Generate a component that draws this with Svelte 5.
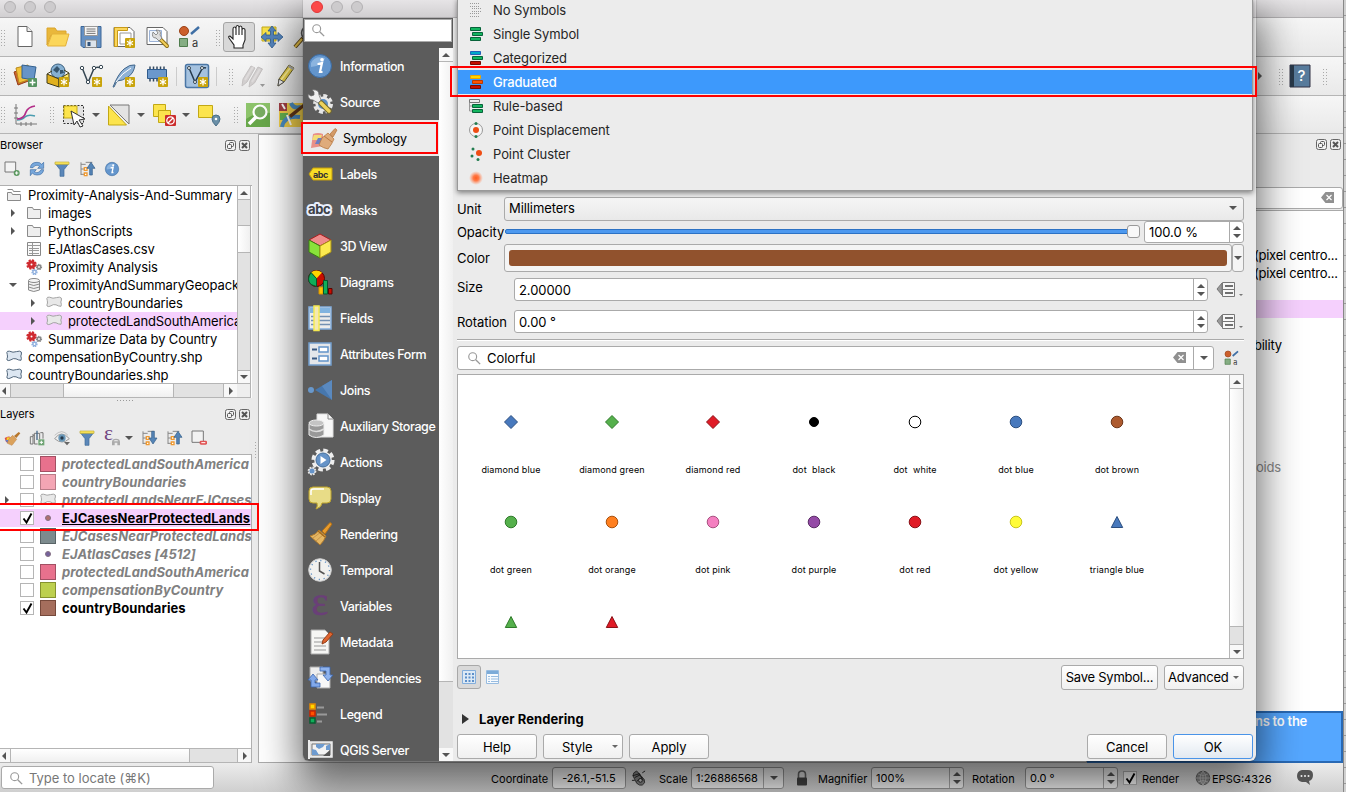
<script>
  const star = '<rect x="13" y="13" width="10" height="10" rx="1" fill="#c9a40c"/><path d="M18 14.500v7M15 16.200l6 3.600M21 16.200l-6 3.600" stroke="#fff" stroke-width="1.300"/>';
  const sheet = '<path d="M5 1.5h9l5 5v15H5z" fill="#fff" stroke="#666"/><path d="M14 1.5v5h5" fill="#eee" stroke="#666"/>';
  const bars = (a, b, c) => `<path d="M2.5 1.5h10v3h-10z" fill="${a[0]}" stroke="${a[1]}"/><path d="M4.500 6.500h10v3h-10z" fill="${b[0]}" stroke="${b[1]}"/><path d="M2.500 11.500h10v3h-10z" fill="${c[0]}" stroke="${c[1]}"/>`;
  const green = ['#13b55f', '#08633a'];
  const gear = (x, y, r, c) => `<g transform="translate(${x} ${y})"><circle r="${r * 0.8}" fill="none" stroke="${c}" stroke-width="${r * 0.5}" stroke-dasharray="${r * 0.38} ${r * 0.248}"/><circle r="${r * 0.55}" fill="none" stroke="${c}" stroke-width="${r * 0.5}"/></g>`;
  const blob = (f, s) => `<path d="M.8 3.500Q1 1.800 3.500 2.200Q7 4 10.500 2.600Q14 1.500 15.300 3Q15.800 5 14.800 7Q15.800 9.500 15 11.300Q12.500 11.300 10 9.800Q7 9 5 10.800Q2.500 12.300 1 11Q.8 9.500 1.500 8Q1.500 5.500 .8 3.500z" fill="${f}" stroke="${s}"/>`;
  const brush = '<path d="M0 8q4-3 8-2l2 7q-4 3-8 1z" fill="#d94a4a"/><path d="M3 7h5v5H3z" fill="#f5d02c"/><path d="M1 11h8v4H4z" fill="#5a7fd0"/><path d="M6 10l6-6 6 6-7 9-7-3z" fill="#dba25c" stroke="#b97a35" stroke-width=".7"/><path d="M14 5l7-6 2.500 2-6 7z" fill="#b8772c"/>';
  const art = {
    page: sheet,
    folder: '<path d="M1 3h8l2 3h9v4H5L1 20z" fill="#e9b73b" stroke="#dba52c"/><path d="M6 9h17l-3.500 12H1.500z" fill="#fbd65b" stroke="#e3b13a"/>',
    save: '<path d="M2 1.500h20v21H4l-2-2z" fill="#6591c4" stroke="#3c6798"/><path d="M5.500 1.500h13v9h-13z" fill="#f5f5f5" stroke="#999"/><path d="M7.500 4h9M7.500 6.200h9M7.500 8.400h9" stroke="#777"/><path d="M6.500 15h11v7.500h-11z" fill="#dce3ea" stroke="#888"/><path d="M8.500 17h3v4h-3z" fill="#33547c"/>',
    newlayout: '<path d="M2 2.500h16l4 4v15H2z" fill="#fff" stroke="#666"/><path d="M2.500 2.500h13v3h-10v16h-3z" fill="#fbd65b" stroke="#c79a19"/><path d="M8 8h11v11H8z" fill="#fff" stroke="#999"/>' + star,
    layouts: '<path d="M2 2.500h16l4 4v13H2z" fill="#fff" stroke="#666"/><path d="M4.500 5.500h12v11h-12z" fill="#eef3fa" stroke="#9bb2d6"/><path d="M15 14l7 7" stroke="#8c6f18" stroke-width="4" stroke-linecap="round"/><path d="M15 14l7 7" stroke="#f4cf5a" stroke-width="2" stroke-linecap="round"/><path d="M8 7l3 3 2-2-2-3q6 0 4 5l2 3-3 3-3-3q-5 0-3-6z" fill="#ddd" stroke="#777" stroke-width=".8"/>',
    styles: '<circle cx="6" cy="6" r="4.500" fill="#cc5f2b" stroke="#9b4217"/><path d="M13 9l8-7" stroke="#3f6fa5" stroke-width="2.500"/><path d="M1.500 13.500h8v8h-8z" fill="#85ad83" stroke="#4f7c4d"/><text x="14" y="22" font-size="11" fill="#333" font-family="Inter, sans-serif">a</text>',
    hand: '<path d="M7 23v-3L2 13q-1-2 1-2l3 3V4q0-2 1.500-2T9 4v6V2.500q0-2 1.500-2T12 2.500V10V3q0-2 1.500-2T15 3v7V5q0-1.500 1.500-1.500T18 5v10l-2 5v3z" fill="#fff" stroke="#222" stroke-width="1.100"/>',
    pan: '<path d="M2 2h14v14H2z" fill="#fbe449" stroke="#c4aa18"/><path d="M12 1l4 5h-2.500v4H18V7.500l5 4.500-5 4.500V14h-4.500v4H16l-4 5-4-5h2.500v-4H6v2.500L1 12l5-4.500V10h4.500V6H8z" fill="#5585bd" stroke="#305d91" stroke-width=".8"/>',
    zoom: '<path d="M10 13l-8 9" stroke="#5d4619" stroke-width="4"/><path d="M9 14l-7 8" stroke="#eac44a" stroke-width="2"/><circle cx="15" cy="8" r="6.500" fill="#eee" stroke="#555" stroke-width="1.500"/>',
    datasource: '<path d="M1 8l13-4 4 12-13 5z" fill="#cc6230" stroke="#954017"/><path d="M3 4l12-3 3 14-12 4z" fill="#f1c13a" stroke="#ba8b1c"/><path d="M9 1l14 2-2 13-12-2z" fill="#6794c7" stroke="#33618f"/><rect x="15" y="14" width="9" height="9" rx="1" fill="#569361"/><path d="M19.500 15.500v6M16.500 18.500h6" stroke="#fff" stroke-width="1.500"/>',
    geopackage: '<circle cx="12" cy="7" r="7" fill="#86b0d2" stroke="#3b607f"/><path d="M7 6l4-4 3 3-3 4zM14 6l3 0 1 3-4 1z" fill="#37566f"/><path d="M1 10l12 5v8L1 19z" fill="#e0b01f" stroke="#413c1a"/><path d="M13 15l10-6v9l-10 5z" fill="#fde76a" stroke="#413c1a"/><path d="M1 10l5-3M23 9l-5-3" stroke="#413c1a"/>' + star,
    shape: '<path d="M3 3.500l6 15 6-14q2-2 6-1" fill="none" stroke="#354652" stroke-width="1.500"/><g fill="#fff" stroke="#354652"><circle cx="3" cy="4" r="1.700"/><circle cx="9" cy="18" r="1.700"/><circle cx="15" cy="4" r="1.700"/><circle cx="22" cy="3" r="1.700"/></g>' + star,
    feather: '<path d="M1 23Q6 10 12 5t11-4q-1 8-7 12T5 17L2 23z" fill="#8fb2d6" stroke="#44688c"/><path d="M4 18Q10 9 19 4" fill="none" stroke="#fff"/>' + star,
    chip: '<path d="M5 2.500v15M8.500 2.500v15M12 2.500v15M15.500 2.500v15M19 2.500v15" stroke="#33485f" stroke-width="1.500"/><path d="M2.500 5.500h19v9h-19z" fill="#6b98cc" stroke="#2f5b8d"/>' + star,
    virtual: '<rect x=".5" y=".500" width="23" height="23" rx="2" fill="#a5c2df" stroke="#4a76a5" stroke-width="1.500"/><path d="M4 4l6 14L17 5q2-2 4-1" fill="none" stroke="#263a4c" stroke-width="1.500"/><g fill="#fff" stroke="#354652"><circle cx="4" cy="4" r="1.500"/><circle cx="10" cy="18" r="1.500"/><circle cx="17" cy="4" r="1.500"/></g>' + star,
    pencils: '<path d="M2 15L10 2l4 2-8 14-5 4zM9 17l8-14 4.500 2-8 14-5.500 4z" fill="#d2cfcf" stroke="#c4c1c1"/><path d="M4 16l8-13M11 18l8-13" stroke="#dedbdb" stroke-width="2"/><path d="M19 20h5l-2.500 3z" fill="#999"/>',
    pencil: '<path d="M5 15L15 1l5 3-10 14-6 4z" fill="#ead24d" stroke="#6d6327"/><path d="M7 16L17 3" stroke="#fff398" stroke-width="1.500"/><path d="M5 15l5 3-6 4z" fill="#eee" stroke="#555"/><path d="M15 1l5 3-1 2-5-3z" fill="#aaa"/>',
    chart: '<path d="M3 1v20h21M1 5h4M1 10h4M1 15h4M8 19v4M13 19v4M18 19v4" fill="none" stroke="#777"/><path d="M4 17q5 0 8-3t10-1" fill="none" stroke="#4b9db0" stroke-width="1.500"/><path d="M4 16q7 0 9-7 2-5 9-6" fill="none" stroke="#b32d88" stroke-width="1.700"/>',
    select: '<path d="M1.500 2.500h20v18h-20z" fill="#e2e2e2" stroke="#333" stroke-dasharray="2 1.500"/><path d="M2 3h13v12H2z" fill="#fce44d" stroke="#c6ad17"/><path d="M9 8l14 8-6 1 4 6-3 1-3-6-3 4z" fill="#fff" stroke="#333"/>',
    deselect: '<path d="M3 2h19v19z" fill="#e3e3e3" stroke="#777"/><path d="M1.500 3v19h18z" fill="#fce44d" stroke="#c2a815"/>',
    clear: '<path d="M1.500 1.500h12v12h-12z" fill="#fce44d" stroke="#c2a815"/><path d="M6.500 7.500h12v12h-12z" fill="#fce44d" stroke="#c2a815"/><rect x="13" y="12" width="11" height="11" rx="1" fill="#cb2d2d"/><circle cx="18.500" cy="17.500" r="3.700" fill="none" stroke="#fff" stroke-width="1.300"/><path d="M16 20l5-5" stroke="#fff" stroke-width="1.300"/>',
    pinmap: '<path d="M1.500 2.500h14v12h-14z" fill="#fce44d" stroke="#c2a815"/><path d="M19 12q4 0 4 4 0 3-4 7-4-4-4-7 0-4 4-4z" fill="#6a8fa7" stroke="#4a6f88"/><circle cx="19" cy="16" r="1.300" fill="#fff"/>',
    find: '<path d="M0 0h24v24H0z" fill="#68a84b"/><path d="M0 0h24v10q-12-2-24 6z" fill="#8dc46b"/><path d="M10 14l-7 7" stroke="#fff" stroke-width="3.500"/><circle cx="14" cy="9" r="6.500" fill="#79ad62" stroke="#fff" stroke-width="2.200"/>',
    osm: '<path d="M0 0h24v24H0z" fill="#f2d04b"/><path d="M0 0h8v8H0z" fill="#a43f46"/><path d="M1 10h8v7H1z" fill="#65b250"/><path d="M3 24q2-12 18-10M12 0q2 6 10 4" fill="none" stroke="#4c8ec4" stroke-width="4"/><path d="M3 1l3 5M8 12l4 10" stroke="#fff" stroke-width="2"/><path d="M10 12L24 1v4l-12 10z" fill="#643819"/>',
    addlayer: '<path d="M1.500 1.500h16v15h-16z" fill="#f3f3f3" stroke="#777" stroke-width="1.500"/><circle cx="19" cy="18" r="4.500" fill="#5c9960"/><path d="M16.500 18h5M19 15.500v5" stroke="#fff" stroke-width="1.500"/>',
    refresh: '<path d="M2 10Q3 2 12 2q5 0 7 3l3-3v9h-9l3-3q-6-4-10 2zM22 13q-1 8-10 8-5 0-7-3l-3 4v-9h9l-3 3q6 4 10-3z" fill="#78a8dc" stroke="#3c6da4"/>',
    filter: '<path d="M2 4h20l-7 9v10h-6V13z" fill="#5b87b9" stroke="#3c6999"/><path d="M1.500 1.500h21v3.500h-21z" fill="#fbe65a" stroke="#c1ad37"/>',
    collapse: '<path d="M3 2v19M3 5h7M3 12h7M3 20h7M10 2h10" fill="none" stroke="#888" stroke-width="1.500"/><path d="M8 10h4v4H8zM8 18h4v4H8z" fill="#fff" stroke="#ef9930" stroke-width="2"/><path d="M16 21V11h-4l6-9 6 9h-4v10z" fill="#5585b7" stroke="#315c88"/>',
    expand: '<path d="M3 2v19M3 5h7M3 12h7M3 20h7M10 2h10" fill="none" stroke="#888" stroke-width="1.500"/><path d="M8 10h4v4H8zM8 18h4v4H8z" fill="#fff" stroke="#ef9930" stroke-width="2"/><path d="M16 2v10h-4l6 9 6-9h-4V2z" fill="#5585b7" stroke="#315c88"/>',
    info: '<circle cx="12" cy="12" r="11.500" fill="#6395cc" stroke="#3b6aa0"/><path d="M3 9q4-8 14-5-2 8-14 9z" fill="#8bb4df"/><path d="M10 10l4-1-2 9h2.500M9.500 10h3" fill="none" stroke="#fff" stroke-width="2.200"/><circle cx="14" cy="5.700" r="1.800" fill="#fff"/>',
    brushbig: '<g transform="translate(1 4)">' + brush + '</g>',
    group: '<path d="M6 6v15H2V10h4M8 21V5h8v9M8 8H6" fill="none" stroke="#777" stroke-width="1.500"/><path d="M17 4h4v9" fill="none" stroke="#777" stroke-width="1.500"/><path d="M12 1v14" stroke="#45688a" stroke-width="2"/><path d="M8 21h5" stroke="#777" stroke-width="1.500"/><path d="M14 14h9v9h-9z" fill="#70a575"/><path d="M16 18.500h5M18.500 16v5" stroke="#fff" stroke-width="1.500"/>',
    eye: '<path d="M1 13q10-14 22 0-11 10-22 0z" fill="#eee" stroke="#999" stroke-width="1.500"/><circle cx="12" cy="12" r="5.500" fill="#6796b7"/><circle cx="12" cy="12" r="2.500" fill="#26394b"/><path d="M1 8Q12-3 21 8" fill="none" stroke="#aaa"/><path d="M15 18h9l-4.500 5z" fill="#666"/>',
    epsilon: '<text x="0" y="15" font-size="32" fill="#70447f" font-family="Liberation Serif, serif">ε</text><path d="M13 23v-5q0-4 5-4t5 4v5M15 23v-5h6v5" fill="none" stroke="#aaa" stroke-width="2"/>',
    remove: '<path d="M1.500 1.500h17v17h-17z" fill="#f2f2f2" stroke="#777" stroke-width="1.500"/><rect x="13" y="16" width="11" height="6" rx="2" fill="#e15454"/><path d="M15.500 19h6" stroke="#fff" stroke-width="1.500"/>',
    dir: '<path d="M1.500 2.500h5l1 2h7v9h-13z" fill="#eee" stroke="#8a8a8a"/>',
    diropen: '<path d="M1.500 13.500v-8h4l1 2h8v6zM1.500 2.500h5l1 2h7" fill="#eee" stroke="#8a8a8a"/>',
    table: '<path d="M1.500 1.500h13v13h-13z" fill="#fafafa" stroke="#888"/><path d="M2 4.500h12M3 7.500h10M3 9.500h10M3 12.500h10M6.500 2v12" stroke="#999"/>',
    model: gear(5.5, 5.5, 5, '#cf2b30') + '<circle cx="5.500" cy="5.500" r="2.500" fill="#cf2b30"/><circle cx="5.500" cy="5.500" r="1" fill="#fff"/>' + gear(13, 8, 3, '#888') + gear(8.500, 13, 3, '#92b2df'),
    db: '<path d="M2.500 4v9q5 3 11 0V4" fill="#f1f1f1" stroke="#8a8a8a"/><ellipse cx="8" cy="3.500" rx="5.500" ry="2" fill="#f5f5f5" stroke="#8a8a8a"/><path d="M2.500 7q5 3 11 0M2.500 10q5 3 11 0" fill="none" stroke="#8a8a8a"/>',
    poly: blob('#e8e8e8', '#a5a5a5'),
    polyblue: blob('#dce6f1', '#52677c'),
    search: '<circle cx="6.500" cy="6.500" r="4.500" fill="none" stroke="#999" stroke-width="1.300"/><path d="M10 10l5 5" stroke="#999" stroke-width="1.600"/>',
    none: '<path d="M2 1.500h10M2 4.500h10M4 6.500h10M4 9.500h10M2 11.500h10M2 14.500h10" stroke="#999" stroke-dasharray="1 1"/>',
    single: bars(green, green, green),
    categorized: bars(['#00a8c8', '#2560b8'], green, ['#c40d00', '#760800']),
    graduated: bars(['#ffd500', '#eea400'], ['#ff5200', '#b83a00'], ['#c40d00', '#760800']),
    rule: '<path d="M1.500 4v9h3M1.500 8h3" fill="none" stroke="#999"/><path d="M1.500 1.500h10v3h-10z" fill="#eee" stroke="#777"/><path d="M4.500 6.500h10v3h-10zM4.500 11.500h10v3h-10z" fill="#13b55f" stroke="#08633a"/>',
    displacement: '<circle cx="8" cy="8" r="6.500" fill="#f5f5f5" stroke="#999"/><circle cx="8" cy="8" r="3" fill="#ef4d14"/><circle cx="8" cy="1.500" r="1.500" fill="#237d50"/><circle cx="8" cy="14.500" r="1.500" fill="#237d50"/>',
    cluster: '<circle cx="11" cy="7" r="3" fill="#ef4d14"/><g fill="#237d50"><circle cx="5" cy="3" r="1.500"/><circle cx="4" cy="10" r="1.500"/><circle cx="10" cy="13.500" r="1.500"/></g>',
    heat: '<defs><radialGradient id="heat"><stop offset="0" stop-color="#ff5d1f"/><stop offset=".4" stop-color="#ff7a48"/><stop offset="1" stop-color="#ff9b75" stop-opacity="0"/></radialGradient></defs><circle cx="8" cy="8" r="7" fill="url(#heat)"/>',
    source: gear(15, 14, 9.500, '#e7e7e7') + '<circle cx="15" cy="14" r="5" fill="#5e8fc4"/><path d="M13 13l8 8" stroke="#71672f" stroke-width="5.500" stroke-linecap="round"/><path d="M13 13l8 8" stroke="#eed35b" stroke-width="3.500" stroke-linecap="round"/><path d="M0 4l3 2 3-1V2L4 0q7-1 7 5l2 5-3 3-5-3q-5 0-5-6z" fill="#eee" stroke="#666" stroke-width=".7"/>',
    symbology: '<path d="M2 8q5-2 10 0v12L0 22z" fill="#e99088"/><path d="M3 9h8l-2 5H1z" fill="#f2dc75"/><path d="M7 12h7v6H4z" fill="#6c7ec2"/><path d="M11 12l6-5 6 6q-2 5-6 10-5-1-9-4z" fill="#dfab7b" stroke="#b97a43" stroke-width=".8"/><path d="M13 10l8 6" stroke="#b97a43"/><path d="M19 8l5-5.500 2 1.500-4 7z" fill="#d39a67" stroke="#b97a43" stroke-width=".8"/>',
    labels: '<path d="M1 12l4-6h19v12H5z" fill="#f8dd25" stroke="#c39c0d"/><text x="5" y="15.500" font-size="9" font-weight="700" fill="#333" font-family="Inter, sans-serif">abc</text>',
    masks: '<text x="0" y="16" font-size="13" font-weight="700" fill="#3c4047" stroke="#e8eefb" stroke-width="4" stroke-linejoin="round" paint-order="stroke" font-family="Inter, sans-serif">abc</text>',
    cube: '<path d="M12 0l11 6-11 6L1 6z" fill="#ef8b8b" stroke="#a91e1e"/><path d="M1 6l11 6v12L1 18z" fill="#89e23a" stroke="#388013"/><path d="M23 6l-11 6v12l11-6z" fill="#fce94f" stroke="#a99114"/>',
    diagrams: '<circle cx="8.500" cy="8.500" r="8" fill="#c80d00" stroke="#590500"/><path d="M8.500 8.500L3 2.500q5-4 11 0z" fill="#ffd500"/><path d="M8.500 8.500L3 2.500q-5 7 0 12l5.500 2z" fill="#10ae59" stroke="#06552c"/><path d="M11 17h4v7h-4z" fill="#ffc500" stroke="#d89000"/><path d="M15.500 10.500h4V24h-4z" fill="#10ae59" stroke="#06552c"/><path d="M20.500 18.500h3.500V24h-3.500z" fill="#c80d00" stroke="#590500"/>',
    fields: '<path d="M1 1h22v22H1z" fill="#ececec" stroke="#83addb" stroke-width="1.500"/><path d="M2 2h20v5H2z" fill="#81b3df"/><path d="M3 10.500h19M3 14.500h19M3 18.500h19" stroke="#7290b2" stroke-width="1.300"/><path d="M6 0h5v24.500H6z" fill="#f4e9b0" stroke="#f5e950" stroke-width="1.500"/>',
    form: '<path d="M1 1h22v22H1z" fill="#e3e6ea" stroke="#739fce" stroke-width="1.500"/><path d="M4 7.500h5M4 16.500h5" stroke="#385881" stroke-width="2"/><path d="M11 5h9v5h-9zM11 14h9v5h-9z" fill="#fff" stroke="#6394c9" stroke-width="1.500"/>',
    joins: '<circle cx="3" cy="12" r="3" fill="#6998cb"/><path d="M7 12L24 2v20z" fill="#4777ad"/><path d="M14 8l10-6v20z" fill="#5a89bf"/>',
    storage: '<path d="M9 0h11l5 5v18H9z" fill="#f7f7f7" stroke="#ddd"/><path d="M20 0v5h5" fill="none" stroke="#888"/><path d="M1 10v11q7 5 15 0V10" fill="#999" stroke="#eee"/><ellipse cx="8.500" cy="9" rx="7.500" ry="3" fill="#c4c4c4" stroke="#eee"/><path d="M1 15q7 5 15 0" fill="none" stroke="#ddd" stroke-width="1.500"/>',
    actions: gear(15, 10, 11, '#eee') + '<circle cx="15" cy="10" r="7" fill="#6593c8" stroke="#456f9c"/><path d="M12.500 6l6 4-6 4z" fill="#fff"/>' + gear(4, 21, 4.200, '#e5e5e5') + '<circle cx="4" cy="21" r="2.500" fill="#6593c8"/>',
    display: '<path d="M5 1h14q4 0 4 4v8q0 4-4 4h-5q0 4-6 6 2-3 1-6H5q-4 0-4-4V5q0-4 4-4z" fill="#e8dc87" stroke="#bda32b"/><path d="M3 9V5q0-2 3-2h10" fill="none" stroke="#fff" stroke-width="1.500"/>',
    rendering: '<path d="M14 9l8-8.500 2 1.500-7 10z" fill="#e79b2d" stroke="#b06f18"/><path d="M2 14q6-1 9-6l7 6q-2 5-6 9z" fill="#e6b763" stroke="#b07a2d"/><path d="M5 16l8-6M8 19l8-7" stroke="#c9964a"/><path d="M10 9l7 6" stroke="#a3691b" stroke-width="1.500"/>',
    clock: '<circle cx="12" cy="12" r="11.300" fill="#f1f1ef" stroke="#ccc"/><path d="M11.500 4v9l5 3" fill="none" stroke="#555" stroke-width="1.500"/><circle cx="12" cy="12" r="9.500" fill="none" stroke="#6090c4" stroke-width="1.300" stroke-dasharray="1.200 3.770"/>',
    variable: '<text x="3.500" y="21" font-size="40" fill="#6a3f78" stroke="#6a3f78" stroke-width=".6" font-family="Liberation Serif, serif">ε</text>',
    metadata: '<path d="M3 0h14l4 4v20H3z" fill="#f6f6f4" stroke="#aaa"/><path d="M6 8h11M6 12h8M6 16h12M6 20h12" stroke="#999"/><path d="M14 14l1-4 7-8 3 2-7 8z" fill="#e0652f" stroke="#943d17"/>',
    dependencies: '<path d="M2 1h13v14H2z" fill="#eee" stroke="#aaa"/><path d="M9 8h13v14H9z" fill="#f7f7f7" stroke="#aaa"/><path d="M12 1h10v8h3l-5 6-5-6h3V5h-6z" fill="#8fb3ee" stroke="#3a65ad" stroke-width=".8"/><path d="M12 21H3v-7H0l5-6 5 6H7v3h5z" fill="#82a9ea" stroke="#3a65ad" stroke-width=".8"/>',
    legend: '<path d="M2 2h5v5H2z" fill="#ffd700" stroke="#e68900" stroke-width="1.500"/><path d="M2 9h5v5H2z" fill="#ff5200" stroke="#c92500" stroke-width="1.500"/><path d="M2 16h5v5H2z" fill="#10ae59" stroke="#075d31" stroke-width="1.500"/><path d="M9 5.500h7M9 12.500h10M9 19.500h5" stroke="#999" stroke-width="2"/>',
    server: '<path d="M1 4h23v15H1z" fill="#ddd" stroke="#eee" stroke-width="1.500"/><path d="M1 2v19" stroke="#eee" stroke-width="2"/><path d="M4 6h18v11H4z" fill="#f2f2f2" stroke="#777"/><path d="M8 6h9l-2 3-4 2-3-2zM4 11l4 1 3 5H4zM18 8l4-2v6h-4z" fill="#6d9bd0"/><path d="M15 18l7-6v6z" fill="#555"/>',
    override: '<path d="M0 8l5-6v12z" fill="#999" stroke="#777"/><path d="M5.500 1.500h12v14h-12z" fill="#f7f7f7" stroke="#777"/><path d="M8 5h8M8 12h8" stroke="#444" stroke-width="1.500"/><path d="M6 8.500h11" stroke="#777"/>',
    grid: '<path d="M.5.5h13v13H.5z" fill="#dce9f5" stroke="#84aedb"/><g fill="#5c8fca"><path d="M3 3h2v2H3zM6.500 3h2v2h-2zM10 3h2v2h-2zM3 6.500h2v2H3zM6.500 6.500h2v2h-2zM10 6.500h2v2h-2zM3 10h2v2H3zM6.500 10h2v2h-2zM10 10h2v2h-2z"/></g>',
    list: '<path d="M.5.5h12v13H.5z" fill="#f6fafe" stroke="#98bce0"/><path d="M1 1h11v3H1z" fill="#7cabd8"/><path d="M2 6.500h2M5 6.500h7M2 9h2M5 9h7M2 11.500h2M5 11.500h7" stroke="#98bce0"/>',
    lock: '<path d="M4.500 8V4.500q0-3.500 3.500-3.500t3.500 3.500V8" fill="none" stroke="#666" stroke-width="1.600"/><rect x="3" y="7.500" width="10" height="8" rx="1" fill="#444"/>',
    mouse: '<path d="M3 3l3-2 8 9q2 4-2 6-3 1-6-2L2 6z" fill="#888" stroke="#222" stroke-width=".8"/><path d="M2 6l7-2M4 8l6-3M8 3l5 8M6 12l6-4M12 3l3-2M1 11h3" stroke="#222"/><circle cx="10" cy="11" r="2" fill="#ccc" stroke="#222"/>',
    globe: '<circle cx="8" cy="8" r="6.800" fill="#888" stroke="#666"/><path d="M1 8h14M8 1v14M3 4q5 3 10 0M3 12q5-3 10 0M8 1q-6 7 0 14M8 1q6 7 0 14" fill="none" stroke="#ccc" stroke-width=".7"/>',
    bubble: '<path d="M6 1h6q5 0 5 5t-4 6l1 4-4-3H6q-5-1-5-6t5-6z" fill="#555"/><g fill="#eee"><circle cx="5.500" cy="7" r="1"/><circle cx="9" cy="7" r="1"/><circle cx="12.500" cy="7" r="1"/></g>',
    float: '<rect x=".5" y=".500" width="10" height="10" rx="2" fill="#f2f2f2" stroke="#666"/><rect x="4.500" y="2.500" width="4" height="4" rx="1" fill="none" stroke="#555"/><rect x="2.500" y="4.500" width="4" height="4" rx="1" fill="#f2f2f2" stroke="#555"/>',
    close: '<rect x=".5" y=".500" width="10" height="10" rx="2" fill="#eee" stroke="#666"/><path d="M3 3l5 5M8 3l-5 5" stroke="#555" stroke-width="2"/>',
    backspace: '<path d="M0 5.500L4.500 0H13v11H4.500z" fill="#909090"/><path d="M5.500 3l5 5M10.500 3l-5 5" stroke="#fff" stroke-width="1.200"/>',
    help: '<path d="M2 1h20v22H2z" fill="#587c9d" stroke="#334"/><path d="M2 1h4v22H2z" fill="#29394a"/><text x="9.500" y="17" font-size="15" font-weight="500" fill="#fff" font-family="Inter, sans-serif">?</text>',
    check: '<path d="M2.500 6.500l3 4 5-9" fill="none" stroke="#000" stroke-width="1.900"/>'
  };

  const row1 = ['h', 'page', 'folder', 'save', 'newlayout', 'layouts', 'styles', 'g12', 'h', 'b:hand', 'pan', 'zoom'];
  const row2 = ['h', 'datasource', 'geopackage', 'shape', 'feather', 'chip', 's', 'virtual', 's', 'g4', 'h', 'pencils', 'pencil'];
  const row3 = ['h', 'chart', 'g7', 'h', 'select', 'a', 'deselect', 'a', 'clear', 'a', 'pinmap', 'g7', 'h', 'find', 'osm'];
  const tree = [
    [0, '', 'diropen', 'Proximity-Analysis-And-Summary'],
    [1, 'r', 'dir', 'images'],
    [1, 'r', 'dir', 'PythonScripts'],
    [1, '', 'table', 'EJAtlasCases.csv'],
    [1, '', 'model', 'Proximity Analysis'],
    [1, 'd', 'db', 'ProximityAndSummaryGeopackage'],
    [2, 'r', 'poly', 'countryBoundaries'],
    [2, 'r', 'poly', 'protectedLandSouthAmerica'],
    [1, '', 'model', 'Summarize Data by Country'],
    [0, '', 'polyblue', 'compensationByCountry.shp'],
    [0, '', 'polyblue', 'countryBoundaries.shp']
  ];
  const layers = [
    ['pink', 'protectedLandSouthAmerica'],
    ['rose', 'countryBoundaries'],
    ['group', 'protectedLandsNearEJCases'],
    ['dot', 'EJCasesNearProtectedLands', true, true],
    ['slate', 'EJCasesNearProtectedLands'],
    ['dot violet', 'EJAtlasCases [4512]'],
    ['pink', 'protectedLandSouthAmerica'],
    ['lime', 'compensationByCountry'],
    ['brown', 'countryBoundaries', true]
  ];
  const pages = [
    ['info', 'Information'], ['source', 'Source'], ['symbology', 'Symbology'], ['labels', 'Labels'],
    ['masks', 'Masks'], ['cube', '3D View'], ['diagrams', 'Diagrams'], ['fields', 'Fields'],
    ['form', 'Attributes Form'], ['joins', 'Joins'], ['storage', 'Auxiliary Storage'], ['actions', 'Actions'],
    ['display', 'Display'], ['rendering', 'Rendering'], ['clock', 'Temporal'], ['variable', 'Variables'],
    ['metadata', 'Metadata'], ['dependencies', 'Dependencies'], ['legend', 'Legend'], ['server', 'QGIS Server']
  ];
  const renderers = [
    ['none', 'No Symbols'], ['single', 'Single Symbol'], ['categorized', 'Categorized'], ['graduated', 'Graduated'],
    ['rule', 'Rule-based'], ['displacement', 'Point Displacement'], ['cluster', 'Point Cluster'], ['heat', 'Heatmap']
  ];
  const D = 'M8 1.500L14.500 8 8 14.500 1.500 8z';
  const T = 'M8 2.500L13.700 13.500H2.300z';
  const symbols = [
    [D, '#4879bd', '#2c4f80', 'diamond blue'], [D, '#55b04c', '#2f7a2a', 'diamond green'], [D, '#e01b26', '#8a1117', 'diamond red'],
    ['small', '#000', '#000', 'dot  black'], ['', '#fff', '#000', 'dot  white'], ['', '#4879bd', '#2c4f80', 'dot blue'],
    ['', '#ad5a2e', '#6e3719', 'dot brown'], ['', '#55b04c', '#2f7a2a', 'dot green'], ['', '#ff7f1f', '#a9500c', 'dot orange'],
    ['', '#f47fc0', '#a8507f', 'dot pink'], ['', '#944aa6', '#5a2b66', 'dot purple'], ['', '#e01b26', '#8a1117', 'dot red'],
    ['', '#fffc38', '#c9c51b', 'dot yellow'], [T, '#4879bd', '#2c4f80', 'triangle blue'], [T, '#55b04c', '#2f7a2a', 'triangle green'],
    [T, '#e01b26', '#8a1117', 'triangle red']
  ];
</script>

{#snippet icon(name, size = 24, box = 24)}
  <svg class="ic" width={size} height={size} viewBox="0 0 {box} {box}">{@html art[name]}</svg>
{/snippet}

{#snippet toolbar(items)}
  <div class="toolbar">
    {#each items as it}
      {#if it === 'h'}<i class="grip"></i>
      {:else if it === 's'}<i class="sep"></i>
      {:else if it === 'a'}<span class="drop"><i class="tri d"></i></span>
      {:else if it[0] === 'g' && it.length < 4}<i class:g4={it === 'g4'} class:g7={it === 'g7'} class:g12={it === 'g12'}></i>
      {:else if it[1] === ':'}<span class="cell on">{@render icon(it.slice(2))}</span>
      {:else}<span class="cell">{@render icon(it)}</span>{/if}
    {/each}
  </div>
{/snippet}

{#snippet spin()}
  <span class="spin"><i class="tri u"></i><i class="tri d"></i></span>
{/snippet}

<div class="screen">
  <div class="window">
    <div class="title"><i></i><i></i><i></i></div>
    <div class="bars">
      {@render toolbar(row1)}
      <div class="barline">{@render toolbar(row2)}<div class="barend"><i class="tri r go"></i><i class="grip"></i>{@render icon('help')}<i class="grip last"></i></div></div>
      {@render toolbar(row3)}
    </div>
    <div class="body">
      <aside class="dock">
        <div class="head"><span>Browser</span>{@render icon('float', 11, 11)}{@render icon('close', 11, 11)}</div>
        <div class="tools">
          {#each ['addlayer', 'refresh', 'filter', 'collapse', 'info'] as n}<span>{@render icon(n, n === 'info' ? 14 : 16)}</span>{/each}
        </div>
        <div class="tree">
          <div class="rows">
            {#each tree as [lvl, arrow, ic, label], i}
              <div class="row l{lvl}" class:sel={i === 7}>
                {#if lvl}<span class="slot">{#if arrow}<i class="tri {arrow}"></i>{/if}</span>{/if}
                {@render icon(ic, 16, 16)}<span class="name">{label}</span>
              </div>
            {/each}
          </div>
          <div class="vs"><b><i class="tri u"></i></b><em></em><u></u><b><i class="tri d"></i></b></div>
          <div class="hs"><b><i class="tri l"></i></b><em></em><u></u><s></s><b><i class="tri r"></i></b></div>
          <div class="corner"></div>
        </div>
        <div class="split"><i></i></div>
        <div class="head low"><span>Layers</span>{@render icon('float', 11, 11)}{@render icon('close', 11, 11)}</div>
        <div class="tools low">
          {#each ['brushbig', 'group', 'eye', 'filter', 'epsilon'] as n}<span>{@render icon(n, 16)}</span>{/each}
          <em><i class="tri d"></i></em>
          {#each ['expand', 'collapse', 'remove'] as n}<span>{@render icon(n, 16)}</span>{/each}
        </div>
        <div class="layers">
          {#each layers as [kind, label, on, active]}
            <div class="layer" class:on class:active>
              <span class="slot">{#if kind === 'group'}<i class="tri r"></i>{/if}</span>
              <span class="box">{#if on}{@render icon('check', 12, 12)}{/if}</span>
              <span class="sw {kind}">{#if kind === 'group'}{@render icon('poly', 16, 16)}{/if}</span>
              <span class="name">{label}</span>
            </div>
          {/each}
          <div class="hs wide"><b><i class="tri l"></i></b><u></u><s></s><b><i class="tri r"></i></b></div>
        </div>
      </aside>
      <div class="vgrip"><i></i></div>
      <div class="canvas"></div>
      <aside class="right">
        <div class="head">{@render icon('float', 11, 11)}{@render icon('close', 11, 11)}</div>
        <div class="find">{@render icon('backspace', 13, 13)}</div>
        <div class="algs">
          <p></p><p></p><p>(pixel centro...</p><p>(pixel centro...</p><p></p><p class="hit"></p><p></p><p>bility</p>
          <p class="dim">oids</p>
        </div>
        <div class="note">ns to the</div>
      </aside>
    </div>
    <footer class="status">
      <div class="locate">{@render icon('search', 14, 16)}<span>Type to locate (⌘K)</span></div>
      <span class="lab">Coordinate</span>
      <div class="inp mid">-26.1,-51.5</div>
      <span class="cen">{@render icon('mouse', 16, 17)}</span>
      <span class="lab">Scale</span>
      <div class="inp"><span>1:26886568</span><b class="cb"><i class="tri d"></i></b></div>
      <span class="cen">{@render icon('lock', 16, 16)}</span>
      <span class="lab">Magnifier</span>
      <div class="inp"><span>100%</span>{@render spin()}</div>
      <span class="lab">Rotation</span>
      <div class="inp"><span>0.0 °</span>{@render spin()}</div>
      <span class="box">{@render icon('check', 12, 12)}</span>
      <span class="lab">Render</span>
      <span class="cen">{@render icon('globe', 16, 16)}</span>
      <span class="lab">EPSG:4326</span>
      <span class="cen">{@render icon('bubble', 18, 18)}</span>
    </footer>
  </div>
  <div class="edge"></div>

  <div class="dialog">
    <div class="title red"><i></i><i></i><i></i></div>
    <div class="dbody">
      <nav>
        <div class="navfind">{@render icon('search', 14, 16)}</div>
        <div class="navwrap">
          <ul>
            {#each pages as [ic, label], i}
              <li class:cur={i === 2}>{@render icon(ic, 25, 25)}<span>{label}</span></li>
            {/each}
          </ul>
          <div class="vs nvs"><b><i class="tri u"></i></b><u></u><em></em><b><i class="tri d"></i></b></div>
        </div>
      </nav>
      <section>
        <div class="form unit"><span>Unit</span><div class="combo">Millimeters<i class="tri d"></i></div></div>
        <div class="form opacity"><span>Opacity</span><div class="track"><i></i></div><div class="field"><span>100.0 %</span>{@render spin()}</div></div>
        <div class="form color"><span>Color</span><div class="well"><i></i></div><div class="wdrop"><i class="tri d"></i></div></div>
        <div class="form size"><span>Size</span><div class="field"><span>2.00000</span>{@render spin()}</div><div class="ovr">{@render icon('override', 18, 18)}<i class="tri d"></i></div></div>
        <div class="form rot"><span>Rotation</span><div class="field"><span>0.00 °</span>{@render spin()}</div><div class="ovr">{@render icon('override', 18, 18)}<i class="tri d"></i></div></div>
        <hr />
        <div class="lookup">
          <div class="field">{@render icon('search', 14, 16)}<span>Colorful</span>{@render icon('backspace', 13, 13)}<b class="cb"><i class="tri d"></i></b></div>
          {@render icon('styles', 16)}
        </div>
        <div class="gallery">
          <div class="cells">
            {#each symbols as [d, fill, stroke, label], i}
              <div class="sym">
                <svg width="16" height="16" viewBox="0 0 16 16">
                  {#if d.length > 9}<path {d} {fill} {stroke} />{:else}<circle cx="8" cy="8" r={d ? 4.5 : 5.8} {fill} {stroke} />{/if}
                </svg>
                {#if i < 14}<span>{label}</span>{/if}
              </div>
            {/each}
          </div>
          <div class="vs gvs"><b><i class="tri u"></i></b><u></u><em></em><b><i class="tri d"></i></b></div>
        </div>
        <div class="views">
          <span class="vbtn on">{@render icon('grid', 14, 14)}</span><span class="vbtn">{@render icon('list', 14, 14)}</span>
          <button class="save">Save Symbol...</button><button class="adv">Advanced<i class="tri d sm"></i></button>
        </div>
        <div class="fold"><i></i>Layer Rendering</div>
        <div class="foot">
          <button>Help</button><button class="sty">Style<i class="tri d sm"></i></button><button>Apply</button>
          <button class="cancel">Cancel</button><button class="ok">OK</button>
        </div>
      </section>
    </div>
    <div class="popup">
      {#each renderers as [ic, label], i}
        <div class="opt" class:hot={i === 3}>{@render icon(ic, 16, 16)}<span>{label}</span></div>
      {/each}
    </div>
  </div>

  <div class="mark m1"></div>
  <div class="mark m2"></div>
  <div class="mark m3"></div>
</div>

<style>
  :global(body) { margin: 0; overflow: hidden; }
  .screen, .screen * { box-sizing: border-box; }
  .screen { position: relative; width: 1346px; height: 792px; overflow: hidden; display: flex; font: 13px/18px Inter, "Liberation Sans", sans-serif; letter-spacing: -.08px; color: #000; background: #ddd; }
  .ic { display: block; flex: none; overflow: visible; }
  .window { width: 1343px; height: 792px; display: flex; flex-direction: column; background: #ebebeb; flex: none; overflow: hidden; }
  .edge { width: 3px; border-left: 1px solid #888; background: repeating-linear-gradient(#d0d0d0 0 15px, #999 15px 16px); }
  .title { height: 18px; flex: none; display: flex; gap: 8px; padding: 1px 0 0 4px; background: linear-gradient(#e6e4e6, #d1cfd1); border-bottom: 1px solid #b0aeb0; }
  .title i { width: 12px; height: 12px; border-radius: 50%; background: #cdcbcd; border: 1px solid #b3b1b3; }
  .title.red { padding-left: 8px; border-radius: 0; }
  .title.red i:first-child { background: #fc4948; border-color: #e0383a; }

  .bars { flex: none; height: 116px; display: grid; grid-template-rows: 39px 39px 38px; }
  .toolbar { display: flex; align-items: center; height: 100%; border-bottom: 1px solid #b5b5b5; background: linear-gradient(#f6f6f6, #e9e9e9); width: 100%; }
  .barline { display: flex; position: relative; }
  .barend { display: flex; align-items: center; position: absolute; right: 13px; top: 7px; }
  .barend .go { border-left-color: #4d9a4d; margin-right: 16px; }
  .barend .grip { margin: 0 4px 0 0; }
  .barend .grip.last { margin: 0 2px 0 10px; }
  .cell { width: 33px; height: 30px; display: flex; justify-content: center; align-items: center; flex: none; }
  .cell.on { width: 32px; border: 1px solid #a5a5a5; border-radius: 3px; background: #d8d8d8; }
  .grip { width: 6px; height: 17px; margin: 0 2px 0 0; flex: none; background: radial-gradient(circle, #aaa .7px, transparent 1px) 0 0 / 3px 3px; }
  .sep { width: 1px; height: 19px; background: #ccc; margin: 0 3px; flex: none; }
  .drop { width: 12px; display: flex; justify-content: center; flex: none; }
  .g4 { width: 8px; } .g7 { width: 8px; } .g12 { width: 9px; }
  .toolbar > i { flex: none; }

  .tri { width: 0; height: 0; flex: none; border: 4px solid transparent; }
  .tri.d { border-top: 4px solid #555; border-bottom: 0; }
  .tri.u { border-bottom: 4px solid #555; border-top: 0; }
  .tri.r { border-left: 4px solid #555; border-right: 0; }
  .tri.l { border-right: 4px solid #555; border-left: 0; }
  .tri.sm { border-width: 3px; border-bottom: 0; border-top-color: #666; }

  .body { height: 629px; flex: none; display: flex; }
  .dock { width: 252px; flex: none; display: flex; flex-direction: column; }
  .head { height: 22px; padding: 0 2px 0 0; display: flex; align-items: center; gap: 3px; font-size: 11px; letter-spacing: 0; flex: none; }
  .head span { flex: 1; }
  .tools { height: 29px; display: flex; align-items: center; flex: none; padding-bottom: 3px; margin-left: -1px; }
  .tools span { width: 25px; display: flex; justify-content: center; }
  .tools em { width: 12px; display: flex; padding-left: 1px; }
  .tree { height: 213px; flex: none; display: grid; grid-template: 197px 15px / 237px 14px; border-top: 1px solid #b0b0b0; background: #fff; }
  .rows { overflow: hidden; letter-spacing: -.13px; }
  .row { height: 18px; display: flex; align-items: center; white-space: nowrap; }
  .row .name { margin-left: 6px; }
  .slot { width: 14px; margin-right: 6px; display: flex; justify-content: center; flex: none; }
  .l0 { padding-left: 6px; }
  .l1 { padding-left: 6px; } .l2 { padding-left: 26px; }
  .sel, .hit { background: #f5d0fd; }
  .vs, .hs { display: flex; background: #e2e2e2; border: solid #b5b5b5; border-width: 0 1px; }
  .vs { flex-direction: column; }
  .hs { border-width: 1px 0; }
  .vs b, .hs b { flex: none; display: flex; align-items: center; justify-content: center; background: #f8f8f8; }
  .vs b { height: 14px; } .hs b { width: 14px; }
  .vs u { background: linear-gradient(90deg, #fff, #f0f0f0); border: solid #b5b5b5; border-width: 1px 0; }
  .hs u { background: linear-gradient(#fff, #f0f0f0); border: solid #b5b5b5; border-width: 0 1px; }
  .vs em { flex: 1; } .hs s { flex: 1; }
  .tree .vs b { height: 13px; }
  .tree .vs em { height: 26px; flex: none; border-top: 1px solid #b5b5b5; }
  .tree .vs u { height: 28px; }
  .tree .vs b:last-child { margin-top: auto; border-top: 1px solid #b5b5b5; }
  .hs b:first-child { width: 11px; padding-right: 3px; border-right: 1px solid #b5b5b5; }
  .hs b:last-child { border-left: 1px solid #b5b5b5; }
  .tree .hs em { width: 52px; } .tree .hs u { width: 111px; }
  .corner { border: solid #b5b5b5; border-width: 1px 1px 1px 0; background: #eee; }
  .split { height: 5px; display: flex; justify-content: center; align-items: flex-start; padding-top: 1px; margin-left: -2px; }
  .split i { width: 18px; height: 3px; background: radial-gradient(circle, #999 .7px, transparent 1px) 0 0 / 3px 3px; }
  .head.low { height: 20px; margin-top: 1px; } .tools.low { height: 30px; }
  .layers { flex: 1; display: flex; flex-direction: column; background: #fff; border: solid #b0b0b0; border-width: 1px 1px 0 0; overflow: hidden; }
  .layer { height: 18px; flex: none; display: flex; align-items: center; color: #808080; font-weight: 700; font-style: italic; white-space: nowrap; overflow: hidden; letter-spacing: .08px; }
  .layer .slot { margin-right: 6px; }
  .layer.on { color: #000; font-style: normal; }
  .layer.active { background: #f5d0fd; } .layer.active .name { text-decoration: underline; }
  .box { width: 14px; height: 14px; border: 1px solid #b5b5b5; background: #fff; display: flex; justify-content: center; align-items: center; flex: none; }
  .sw { width: 16px; height: 16px; margin: 0 6px; border: 1px solid #777; flex: none; }
  .pink { background: #e8718d; border-color: #a25063; } .rose { background: #f4a5b4; border-color: #b97b87; }
  .slate { background: #7d8b8e; border-color: #596467; } .lime { background: #bdd04f; border-color: #86932f; } .brown { background: #a56e5d; border-color: #76493b; }
  .sw.group { border: 0; }
  .sw.dot { width: 6px; height: 6px; border-radius: 50%; margin: 0 11px; background: #b07070; border-color: #857184; }
  .sw.violet { background: #75629c; }
  .hs.wide { height: 15px; margin-top: auto; flex: none; } .hs.wide u { width: 179px; border-left: 0; }
  .vgrip { width: 6px; display: flex; align-items: flex-start; padding: 307px 0 0 2px; }
  .vgrip i { width: 3px; height: 18px; background: radial-gradient(circle, #aaa .7px, transparent 1px) 0 0 / 3px 3px; }
  .canvas { flex: 1; background: #fff; border: 1px solid #aaa; }
  .right { width: 256px; display: flex; flex-direction: column; letter-spacing: -.25px; }
  .right .head { justify-content: flex-end; margin-top: -1px; height: 23px; }
  .find { height: 22px; margin-top: 31px; background: #fff; border: 1px solid #aaa; display: flex; align-items: center; justify-content: flex-end; padding-right: 8px; border-radius: 3px; flex: none; }
  .algs { flex: 1; background: #fff; border-top: 1px solid #aaa; margin-top: 1px; }
  .algs p { margin: 0; height: 18px; padding-left: 167px; white-space: nowrap; }
  .algs p:first-child { height: 17px; }
  .algs .dim { color: #888; margin-top: 104px; padding-left: 169px; }
  .note { height: 52px; flex: none; background: #55a7ff; border: 2px solid #2969b4; color: #fff; font-weight: 600; padding: 0 0 0 166px; line-height: 17px; }

  .status { height: 29px; flex: none; display: grid; align-items: center; padding-top: 1px; font-size: 11px; letter-spacing: 0; background: linear-gradient(#ececec, #cfcfcf);
    grid-template-columns: 491px 61px 75px 24px 32px 102px 33px 53px 101px 53px 98px 19px 51px 19px 83px 20px; }
  .locate { width: 213px; height: 23px; margin: -1px 0 0 1px; border: 1px solid #aaa; border-radius: 3px; background: #fff; display: flex; align-items: center; gap: 6px; padding-left: 7px; color: #777; font-size: 13px; letter-spacing: -.02px; }
  .lab { white-space: nowrap; padding-top: 1px; }
  .cen { display: flex; justify-content: center; }
  .inp { height: 22px; border: 1px solid #999; border-radius: 3px; background: rgba(255,255,255,.8); display: flex; align-items: center; padding-left: 4px; }
  .status .inp { width: 93px; }
  .status > :nth-child(5) { padding-left: 8px; }
  .status > :nth-child(6) { margin-left: 8px; }
  .inp.inp.mid { width: 74px; justify-content: center; padding: 0; }
  .inp span:first-child { flex: 1; }
  .spin { width: 14px; align-self: stretch; display: flex; flex-direction: column; gap: 4px; align-items: center; justify-content: center; border-left: 1px solid #aaa; flex: none; }
  .cb { width: 20px; align-self: stretch; display: flex; align-items: center; justify-content: center; border-left: 1px solid #aaa; flex: none; }

  .dialog { position: absolute; left: 303px; top: 0; width: 953px; height: 761px; background: #ebebeb; border-radius: 0 0 6px 6px; box-shadow: 0 0 1px rgba(0,0,0,.7), 0 18px 42px 4px rgba(0,0,0,.6); display: flex; flex-direction: column; }
  .dbody { flex: 1; display: flex; min-height: 0; }
  nav { width: 150px; background: #5c5c5c; display: flex; flex-direction: column; border-radius: 0 0 0 6px; overflow: hidden; flex: none; }
  .navfind { height: 23px; margin: 1px 1px 6px 1px; background: #fff; border: 1px solid #aaa; padding: 3px 0 0 6px; flex: none; }
  .navwrap { display: flex; flex: 1; min-height: 0; }
  ul { list-style: none; margin: 0; padding: 0; width: 136px; overflow: hidden; }
  li { height: 36px; display: flex; align-items: center; padding-left: 5px; gap: 7px; color: #fff; white-space: nowrap; font-weight: 500; font-size: 12.5px; letter-spacing: -.4px; }
  li span { padding-top: 2px; }
  li.cur { background: #ebebeb; color: #000; padding-left: 8px; font-weight: 400; letter-spacing: -.3px; }
  .vs.nvs { width: 14px; border: 0; } .nvs u { height: 621px; border-top: 1px solid #b5b5b5; } .nvs b { height: 13px; }
  section { flex: 1; padding: 179px 12px 0 4px; display: flex; flex-direction: column; min-width: 0; }
  .form { display: grid; flex: none; align-items: center; }
  .combo { height: 24px; border: 1px solid #aaa; border-radius: 3px; background: linear-gradient(#f5f5f5, #e9e9e9); display: flex; justify-content: space-between; align-items: center; padding: 0 6px 1px 4px; }
  .field { height: 100%; border: 1px solid #aaa; border-radius: 3px; background: #fff; display: flex; align-items: center; padding-left: 4px; }
  .field span:first-child { flex: 1; }
  .unit { height: 24px; grid-template-columns: 47px 1fr; }
  .unit .combo, .unit span { margin-top: -1px; }
  .opacity { height: 22px; grid-template-columns: 48px 636px 1fr; column-gap: 0; }
  .opacity .field { margin-left: 3px; }
  .track { background: #4d99ef; border: 1px solid #2c72c4; border-radius: 2px; position: relative; height: 5px; margin: -2px 1px 0 0; }
  .track i { position: absolute; right: -1px; top: -5px; width: 13px; height: 13px; border: 1px solid #999; border-radius: 3px; background: #f8f8f8; }
  .color { height: 28px; margin-top: 1px; grid-template-columns: 47px 728px 12px; }
  .well { height: 28px; padding: 5px 4px; border: 1px solid #aaa; border-radius: 3px; background: #f4f4f4; }
  .well i { display: block; height: 16px; border-radius: 3px; background: #91522d; }
  .wdrop { height: 28px; border: 1px solid #aaa; border-radius: 3px; display: flex; justify-content: center; align-items: center; background: #f4f4f4; }
  .size, .rot { height: 23px; margin-top: 6px; grid-template-columns: 57px 694px 1fr; }
  .size > span { margin-top: -5px; }
  .rot { margin-top: 9px; }
  .ovr { display: flex; align-items: center; gap: 4px; padding-left: 9px; }
  .ovr .tri { border-width: 2.5px; border-bottom: 0; margin-top: 10px; border-top-color: #777; }
  hr { width: 100%; height: 2px; margin: 6px 0 5px; border: 0; border-top: 1px solid #aaa; background: #fff; flex: none; }
  .lookup { height: 24px; display: grid; grid-template-columns: 757px 1fr; align-items: center; column-gap: 10px; flex: none; }
  .lookup .field { padding-left: 9px; gap: 6px; }
  .lookup .field span { flex: 1; }
  .lookup .cb { margin-left: 1px; }
  .gallery { height: 285px; margin-top: 4px; border: 1px solid #aaa; background: #fff; display: flex; flex: none; }
  .cells { flex: 1; padding-left: 2px; display: grid; grid-template-columns: repeat(7, 101px); grid-auto-rows: 100px; overflow: hidden; }
  .sym { display: flex; flex-direction: column; align-items: center; padding-top: 39px; font-size: 9px; line-height: 12px; letter-spacing: .13px; white-space: pre; }
  .sym svg { flex: none; }
  .sym span { margin-top: 34px; padding-left: 1px; }
  .vs.gvs { width: 14px; border-right: 0; } .gvs b { height: 13px; } .gvs u { height: 239px; } .gvs b:last-child { border-top: 1px solid #b5b5b5; height: 14px; }
  .views { margin-top: 5px; height: 26px; display: flex; align-items: center; flex: none; }
  .vbtn { width: 24px; height: 24px; display: flex; align-items: center; justify-content: center; }
  .vbtn.on { border: 1px solid #a8a8a8; border-radius: 3px; background: #d9d9d9; }
  button { height: 25px; width: 80px; padding: 0; margin: 0; border: 1px solid #aaa; border-radius: 3px; background: linear-gradient(#fff, #f0f0f0); font: inherit; letter-spacing: -.1px; color: #000; flex: none; }
  .save { margin-left: auto; width: 97px; letter-spacing: -.25px; } .adv { margin-left: 6px; letter-spacing: -.2px; }
  .adv, .sty { display: flex; align-items: center; justify-content: space-between; padding: 0 4px 0 3px; }
  .sty { padding-left: 18px; }
  .fold { height: 18px; margin-top: 20px; display: flex; align-items: center; gap: 10px; font-weight: 700; padding-left: 5px; flex: none; letter-spacing: .07px; }
  .fold i { border: 5px solid transparent; border-left: 7px solid #333; border-right: 0; }
  .foot { display: flex; gap: 6px; margin: 6px -9px 0 0; flex: none; }
  .cancel { margin-left: auto; } .ok { border-color: #4a94e8; background: linear-gradient(#fff, #e2e9f1); }

  .popup { position: absolute; left: 154px; top: -2px; width: 796px; height: 193px; background: #ececec; border: solid #999; border-width: 0 1px 1px; box-shadow: 0 2px 5px rgba(0,0,0,.45); letter-spacing: -.1px; }
  .opt { height: 24px; display: flex; align-items: center; padding-left: 10px; gap: 9px; color: #262626; }
  .hot { background: #3d99fc; color: #fff; font-weight: 500; letter-spacing: -.2px; }
  .mark { position: absolute; border: 2px solid #f00; }
  .m1 { left: 301px; top: 122px; width: 137px; height: 32px; }
  .m2 { left: 450px; top: 66px; width: 807px; height: 31px; }
  .m3 { left: -3px; top: 503px; width: 262px; height: 28px; }
</style>
